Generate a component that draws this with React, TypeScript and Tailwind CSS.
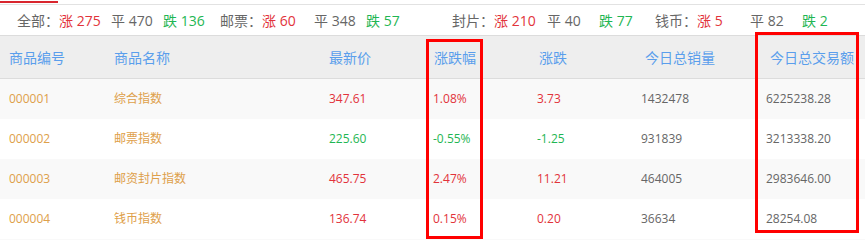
import React from 'react';

type Row = {
  code: string;
  name: string;
  price: string;
  pct: string;
  chg: string;
  vol: string;
  amount: string;
  up: boolean;
};

const rows: Row[] = [
  { code: '000001', name: '综合指数', price: '347.61', pct: '1.08%', chg: '3.73', vol: '1432478', amount: '6225238.28', up: true },
  { code: '000002', name: '邮票指数', price: '225.60', pct: '-0.55%', chg: '-1.25', vol: '931839', amount: '3213338.20', up: false },
  { code: '000003', name: '邮资封片指数', price: '465.75', pct: '2.47%', chg: '11.21', vol: '464005', amount: '2983646.00', up: true },
  { code: '000004', name: '钱币指数', price: '136.74', pct: '0.15%', chg: '0.20', vol: '36634', amount: '28254.08', up: true },
];

const cols = 'grid grid-cols-[105px_215px_105px_105px_102px_125px_108px]';
const font = { fontFamily: '"Open Sans", "Noto Sans CJK SC", sans-serif' };

const App: React.FC = () => {
  return (
    <div className="relative w-[865px] h-[240px] overflow-hidden bg-white" style={font}>
      {/* tab underline */}
      <div className="h-[4px] border-b border-[#e2e2e2]">
        <div className="mt-[1px] h-[2px] w-[58px] bg-[#d9262e]"></div>
      </div>

      {/* summary line */}
      <div className="flex items-center h-[31px] border-b border-[#dcdcdc] pl-[17px] text-[14px] text-[#666]">
        <span className="w-[42px]">全部：</span>
        <span className="w-[52px] text-[#e2333b]">涨 275</span>
        <span className="w-[52px]">平 470</span>
        <span className="w-[57px] text-[#1fb653]">跌 136</span>
        <span className="w-[42px]">邮票：</span>
        <span className="w-[52px] text-[#e2333b]">涨 60</span>
        <span className="w-[52px]">平 348</span>
        <span className="w-[86px] text-[#1fb653]">跌 57</span>
        <span className="w-[42px]">封片：</span>
        <span className="w-[53px] text-[#e2333b]">涨 210</span>
        <span className="w-[52px]">平 40</span>
        <span className="w-[56px] text-[#1fb653]">跌 77</span>
        <span className="w-[42px]">钱币：</span>
        <span className="w-[53px] text-[#e2333b]">涨 5</span>
        <span className="w-[52px]">平 82</span>
        <span className="text-[#1fb653]">跌 2</span>
      </div>

      {/* table header */}
      <div className={`${cols} h-[43px] items-center bg-[#eeeeee] border-b border-[#dcdcdc] text-[14px] text-[#5a9eec]`}>
        <div className="pl-[9px]">商品编号</div>
        <div className="pl-[9px]">商品名称</div>
        <div className="pl-[9px]">最新价</div>
        <div className="pl-[9px]">涨跌幅</div>
        <div className="pl-[9px]">涨跌</div>
        <div className="pl-[13px]">今日总销量</div>
        <div className="pl-[13px]">今日总交易额</div>
      </div>

      {/* table body */}
      {rows.map((r, i) => {
        const tone = r.up ? 'text-[#e2333b]' : 'text-[#1fb653]';
        return (
          <div
            key={r.code}
            className={`${cols} h-[40px] items-center text-[12px] ${i % 2 === 0 ? 'bg-[#f9f9f9]' : 'bg-white'}`}
          >
            <div className="pl-[9px] text-[#dea04a]">{r.code}</div>
            <div className="pl-[9px] text-[#dea04a]">{r.name}</div>
            <div className={`pl-[9px] ${tone}`}>{r.price}</div>
            <div className={`pl-[8px] ${tone}`}>{r.pct}</div>
            <div className={`pl-[7px] ${tone}`}>{r.chg}</div>
            <div className="pl-[9px] text-[#666]">{r.vol}</div>
            <div className="pl-[9px] text-[#666]">{r.amount}</div>
          </div>
        );
      })}
      <div className="h-[40px] bg-[#f9f9f9]"></div>

      {/* highlight boxes */}
      <div className="absolute left-[426px] top-[39px] w-[57px] h-[200px] border-[3px] border-[#ff0000]"></div>
      <div className="absolute left-[755px] top-[32px] w-[104px] h-[201px] border-[3px] border-[#ff0000]"></div>
    </div>
  );
};

export default App;
